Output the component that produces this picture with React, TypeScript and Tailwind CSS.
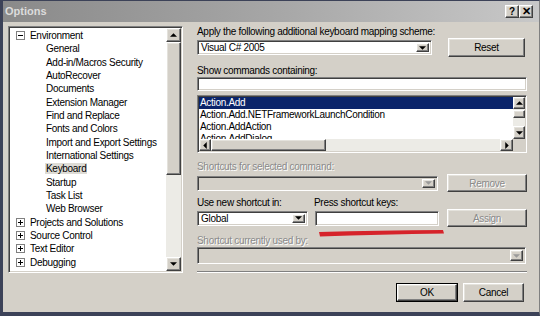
import React from 'react';

// classic 3D borders
const sunken =
  'border border-t-[#808080] border-l-[#808080] border-r-white border-b-white shadow-[inset_1px_1px_0_#404040,inset_-1px_-1px_0_#d4d0c8]';
const raised =
  'border border-t-white border-l-white border-r-[#404040] border-b-[#404040] shadow-[inset_-1px_-1px_0_#808080,inset_1px_1px_0_#e4e2dc]';
const disabledText = 'text-[#8a8a8a] [text-shadow:1px_1px_0_#ffffff]';

type Dir = 'up' | 'down' | 'left' | 'right';

function Tri({ dir, disabled }: { dir: Dir; disabled?: boolean }) {
  const vertical = dir === 'up' || dir === 'down';
  const pts = {
    up: '0,3 3,0 6,3',
    down: '0,0 6,0 3,3',
    left: '3,0 3,6 0,3',
    right: '0,0 0,6 3,3',
  }[dir];
  return (
    <svg width={vertical ? 7 : 4} height={vertical ? 4 : 7} viewBox={vertical ? '0 0 6 3' : '0 0 3 6'}>
      <polygon points={pts} fill={disabled ? '#9a9a9a' : '#000000'} />
    </svg>
  );
}

function ArrowBtn({ dir, disabled, className = '' }: { dir: Dir; disabled?: boolean; className?: string }) {
  return (
    <div className={`${raised} bg-[#d4d0c8] flex items-center justify-center shrink-0 ${className}`}>
      <Tri dir={dir} disabled={disabled} />
    </div>
  );
}

function Combo({ text, disabled, className = '' }: { text?: string; disabled?: boolean; className?: string }) {
  return (
    <div className={`${sunken} flex p-[2px] ${disabled ? 'bg-[#d4d0c8]' : 'bg-white'} ${className}`}>
      <div className="flex-1 flex items-center pl-[1px] text-black">{text}</div>
      <ArrowBtn dir="down" disabled={disabled} className="w-[13px]" />
    </div>
  );
}

function Button({ label, disabled, isDefault, className = '' }: { label: string; disabled?: boolean; isDefault?: boolean; className?: string }) {
  const inner = (
    <div className={`${raised} bg-[#d4d0c8] flex-1 flex items-center justify-center ${disabled ? disabledText : 'text-black'}`}>
      {label}
    </div>
  );
  if (isDefault) {
    return <div className={`border border-black flex ${className}`}>{inner}</div>;
  }
  return <div className={`flex ${className}`}>{inner}</div>;
}

const tree: { label: string; level: number; box?: string; sel?: boolean }[] = [
  { label: 'Environment', level: 0, box: '-' },
  { label: 'General', level: 1 },
  { label: 'Add-in/Macros Security', level: 1 },
  { label: 'AutoRecover', level: 1 },
  { label: 'Documents', level: 1 },
  { label: 'Extension Manager', level: 1 },
  { label: 'Find and Replace', level: 1 },
  { label: 'Fonts and Colors', level: 1 },
  { label: 'Import and Export Settings', level: 1 },
  { label: 'International Settings', level: 1 },
  { label: 'Keyboard', level: 1, sel: true },
  { label: 'Startup', level: 1 },
  { label: 'Task List', level: 1 },
  { label: 'Web Browser', level: 1 },
  { label: 'Projects and Solutions', level: 0, box: '+' },
  { label: 'Source Control', level: 0, box: '+' },
  { label: 'Text Editor', level: 0, box: '+' },
  { label: 'Debugging', level: 0, box: '+' },
  { label: 'Device Tools', level: 0, box: '+' },
];

const commands = ['Action.Add', 'Action.Add.NETFrameworkLaunchCondition', 'Action.AddAction', 'Action.AddDialog'];

function ExpandBox({ sign }: { sign: string }) {
  return (
    <div className="w-[9px] h-[9px] border border-[#808080] bg-white flex items-center justify-center relative shrink-0">
      <div className="w-[5px] h-[1px] bg-black" />
      {sign === '+' && <div className="absolute w-[1px] h-[5px] bg-black" />}
    </div>
  );
}

function TreePanel() {
  return (
    <div className={`${sunken} w-[175px] h-[247px] p-[1px] bg-white flex`}>
      <div className="flex-1 overflow-hidden pt-[1px]">
        {tree.map((n) => (
          <div key={n.label} className={`h-[13.33px] flex items-center ${n.level === 0 ? 'pl-[6px]' : 'pl-[35px]'}`}>
            {n.box && <ExpandBox sign={n.box} />}
            <span className={`${n.box ? 'ml-[4px]' : ''} px-[1px] leading-[11px] whitespace-nowrap ${n.sel ? 'bg-[#dedcd6]' : ''}`}>
              {n.label}
            </span>
          </div>
        ))}
      </div>
      <div className="w-[15px] flex flex-col bg-[#ecebe6]">
        <ArrowBtn dir="up" className="h-[14px]" />
        <div className={`${raised} bg-[#d4d0c8] h-[133px]`} />
        <div className="flex-1" />
        <ArrowBtn dir="down" className="h-[14px]" />
      </div>
    </div>
  );
}

function CommandList() {
  return (
    <div className={`${sunken} h-[58px] p-[1px] bg-white grid grid-cols-[1fr_12px] grid-rows-[1fr_12px]`}>
      <div className="overflow-hidden">
        {commands.map((c, i) => (
          <div
            key={c}
            className={`h-[12px] leading-[12px] pl-[1px] whitespace-nowrap ${i === 0 ? 'bg-[#0a246a] text-white' : 'text-black'}`}
          >
            {c}
          </div>
        ))}
      </div>
      <div className="flex flex-col bg-[#ecebe6]">
        <ArrowBtn dir="up" className="h-[12px]" />
        <div className={`${raised} bg-[#d4d0c8] h-[8px] mt-[1px]`} />
        <div className="flex-1" />
        <ArrowBtn dir="down" className="h-[13px]" />
      </div>
      <div className="flex bg-[#ecebe6]">
        <ArrowBtn dir="left" className="w-[12px]" />
        <div className={`${raised} bg-[#d4d0c8] w-[115px]`} />
        <div className="flex-1" />
        <ArrowBtn dir="right" className="w-[13px]" />
      </div>
      <div className="bg-[#d4d0c8]" />
    </div>
  );
}

export default function App() {
  return (
    <div className="w-[540px] h-[316px] flex flex-col bg-[#d4d0c8] border-t border-l-[3px] border-r border-b-[4px] border-t-[#3c4258] border-l-[#3c4258] border-r-[#808080] border-b-[#3c4258] text-[10px] tracking-[-0.3px] text-black font-['Liberation_Sans',Arial,sans-serif] overflow-hidden">
      {/* title bar */}
      <div className="h-[21px] shrink-0 flex items-center pl-[2px] pr-[6px] bg-gradient-to-r from-[#8a8a8a] via-[#a6a6a6] to-[#c8c8c8]">
        <span className="font-bold text-[11px] tracking-normal text-[#dcdcdc]">Options</span>
        <div className="flex-1" />
        <div className={`${raised} w-[14px] h-[13px] bg-[#d4d0c8] flex items-center justify-center font-bold text-[10px] leading-none`}>?</div>
        <div className={`${raised} w-[14px] h-[13px] bg-[#d4d0c8] flex items-center justify-center font-bold text-[11px] leading-none`}>✕</div>
      </div>

      {/* body */}
      <div className="flex-1 flex pt-[4px] pl-[5px]">
        <TreePanel />

        <div className="ml-[14px] w-[330px] flex flex-col">
          <div className="h-[12px] leading-[12px]">Apply the following additional keyboard mapping scheme:</div>
          <div className="h-[19px] flex items-center">
            <Combo text="Visual C# 2005" className="w-[235px] h-[15px]" />
            <Button label="Reset" className="ml-[16px] w-[77px] h-[19px]" />
          </div>

          <div className="mt-[8px] h-[12px] leading-[12px]">Show commands containing:</div>
          <div className={`${sunken} h-[14px] bg-white`} />

          <div className="mt-[4px]">
            <CommandList />
          </div>

          <div className={`mt-[8px] h-[12px] leading-[12px] ${disabledText}`}>Shortcuts for selected command:</div>
          <div className="mt-[1px] h-[18px] flex items-center">
            <Combo disabled className="w-[241px] h-[15px]" />
            <Button label="Remove" disabled className="ml-[9px] w-[80px] h-[18px]" />
          </div>

          <div className="mt-[5px] h-[12px] leading-[12px] flex">
            <span className="w-[117px]">Use new shortcut in:</span>
            <span>Press shortcut keys:</span>
          </div>
          <div className="h-[18px] flex items-center">
            <Combo text="Global" className="w-[111px] h-[15px]" />
            <div className="ml-[7px] relative">
              <div className={`${sunken} w-[124px] h-[15px] bg-white`} />
              <svg className="absolute left-[3px] top-[18px]" width="127" height="9" viewBox="0 0 127 9">
                <path d="M1,3 Q60,1.5 125,1 L126,4.5 Q62,5.5 2,7.5 Z" fill="#d6232a" />
              </svg>
            </div>
            <Button label="Assign" disabled className="ml-[8px] w-[80px] h-[18px]" />
          </div>

          <div className={`mt-[8px] h-[12px] leading-[12px] ${disabledText}`}>Shortcut currently used by:</div>
          <Combo disabled className="w-[329px] h-[17px]" />

          <div className="mt-[7px] h-[2px] border-t border-t-[#808080] border-b border-b-white" />

          <div className="mt-[10px] flex justify-end pr-[3px]">
            <Button label="OK" isDefault className="w-[62px] h-[19px]" />
            <Button label="Cancel" className="ml-[5px] w-[61px] h-[19px]" />
          </div>
        </div>
      </div>
    </div>
  );
}
